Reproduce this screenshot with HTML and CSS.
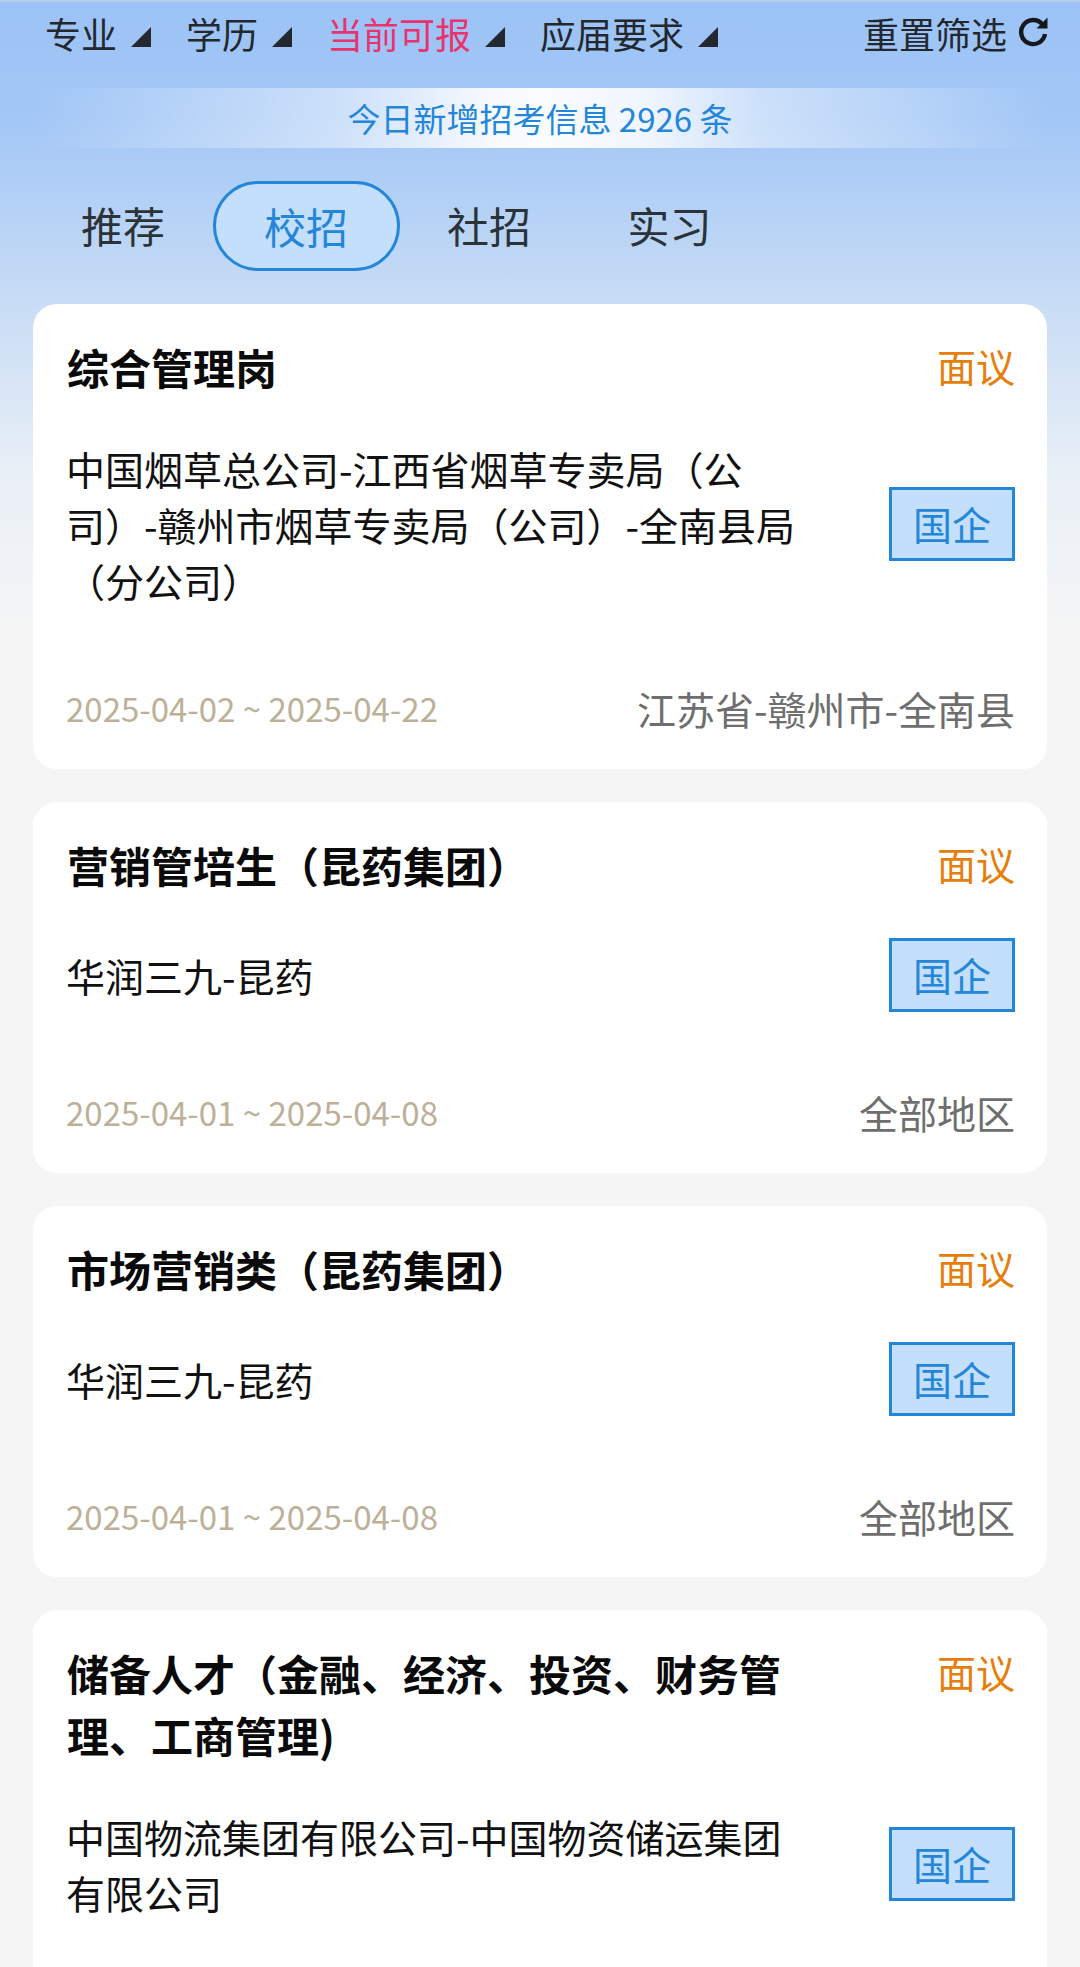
FILE: index.html
```html
<!DOCTYPE html>
<html lang="zh-CN">
<head>
  <meta charset="UTF-8">
  <meta name="viewport" content="width=device-width, initial-scale=1.0">
  <title>招考信息</title>
  <link rel="stylesheet" href="styles.css">
</head>
<body>
  <div class="page">
    <!-- Filters -->
    <div class="filters">
      <div class="filter"><span>专业</span><i class="corner"></i></div>
      <div class="filter"><span>学历</span><i class="corner"></i></div>
      <div class="filter active"><span>当前可报</span><i class="corner"></i></div>
      <div class="filter"><span>应届要求</span><i class="corner"></i></div>
      <div class="reset">
        <span>重置筛选</span>
        <svg class="reset-icon" viewBox="0 0 32 32" width="32" height="32">
          <path d="M24.5 9.5A12 12 0 1 0 27 19" fill="none" stroke="#14181f" stroke-width="4.4"/>
          <path d="M29.5 2.500V13.500H18.500Z" fill="#14181f"/>
        </svg>
      </div>
    </div>

    <div class="notice"><span>今日新增招考信息 2926 条</span></div>

    <!-- Tabs -->
    <div class="tabs">
      <div class="tab">推荐</div>
      <div class="tab selected">校招</div>
      <div class="tab">社招</div>
      <div class="tab">实习</div>
    </div>

    <!-- Job list -->
    <div class="list">
      <div class="card">
        <div class="card-top">
          <h3>综合管理岗</h3>
          <div class="salary">面议</div>
        </div>
        <div class="card-mid">
          <p>中国烟草总公司-江西省烟草专卖局（公司）-赣州市烟草专卖局（公司）-全南县局（分公司）</p>
          <div class="tag">国企</div>
        </div>
        <div class="card-bottom">
          <div class="dates">2025-04-02 ~ 2025-04-22</div>
          <div class="area">江苏省-赣州市-全南县</div>
        </div>
      </div>

      <div class="card">
        <div class="card-top">
          <h3>营销管培生（昆药集团）</h3>
          <div class="salary">面议</div>
        </div>
        <div class="card-mid">
          <p>华润三九-昆药</p>
          <div class="tag">国企</div>
        </div>
        <div class="card-bottom">
          <div class="dates">2025-04-01 ~ 2025-04-08</div>
          <div class="area">全部地区</div>
        </div>
      </div>

      <div class="card">
        <div class="card-top">
          <h3>市场营销类（昆药集团）</h3>
          <div class="salary">面议</div>
        </div>
        <div class="card-mid">
          <p>华润三九-昆药</p>
          <div class="tag">国企</div>
        </div>
        <div class="card-bottom">
          <div class="dates">2025-04-01 ~ 2025-04-08</div>
          <div class="area">全部地区</div>
        </div>
      </div>

      <!-- cut off by the bottom of the screen -->
      <div class="card last">
        <div class="card-top">
          <h3>储备人才（金融、经济、投资、财务管理、工商管理)</h3>
          <div class="salary">面议</div>
        </div>
        <div class="card-mid">
          <p>中国物流集团有限公司-中国物资储运集团有限公司</p>
          <div class="tag">国企</div>
        </div>
      </div>
    </div>
  </div>
</body>
</html>
```

FILE: styles.css
```css
* {
  box-sizing: border-box;
}

body {
  margin: 0;
  padding: 0;
  background: #f5f5f5;
  font-family: "Noto Sans CJK SC", "Noto Sans", sans-serif;
}

.page {
  height: 1967px;
  overflow: hidden;
  background: linear-gradient(180deg, #9cc3f6 0, #a3c7f6 120px, #c9ddf5 305px, #eaf0f7 480px, #f5f5f5 640px);
  border-top: 2px solid #b4cde8;
}

.filters {
  display: flex;
  align-items: center;
  height: 62px;
  padding: 0 30px 0 45px;
  font-size: 36px;
  color: #23282f;
}

.filter {
  display: flex;
  align-items: center;
  margin-right: 35px;
}

.filter.active span {
  color: #e8336f;
}

.corner {
  width: 0;
  height: 0;
  margin-left: 14px;
  margin-top: 8px;
  border-style: solid;
  border-width: 0 0 20px 20px;
  border-color: transparent transparent #23282f transparent;
}

.reset {
  display: flex;
  align-items: center;
  margin-left: auto;
  gap: 11px;
}

.reset-icon {
  margin-top: -4px;
}

.notice {
  height: 60px;
  margin: 24px 32px 0;
  display: flex;
  align-items: center;
  justify-content: center;
  font-size: 33px;
  color: #2486d9;
  background: linear-gradient(90deg, rgba(255, 255, 255, 0) 0, rgba(255, 255, 255, 0.15) 10%, rgba(255, 255, 255, 0.3) 20%, rgba(255, 255, 255, 0.45) 30%, rgba(255, 255, 255, 0.9) 45%, rgba(255, 255, 255, 0.95) 50%, rgba(255, 255, 255, 0.85) 60%, rgba(255, 255, 255, 0.45) 72%, rgba(255, 255, 255, 0.25) 85%, rgba(255, 255, 255, 0) 100%);
}

.tabs {
  display: flex;
  align-items: center;
  margin-top: 33px;
  padding-left: 41px;
  font-size: 42px;
  color: #2b3238;
}

.tab {
  width: 164px;
  height: 90px;
  margin-right: 16.500px;
  line-height: 88px;
  text-align: center;
}

.tab.selected {
  width: 187px;
  color: #2486d9;
  background: #c4dffb;
  border: 3px solid #2486d9;
  border-radius: 45px;
  margin-left: -9px;
  margin-right: 7.500px;
  line-height: 84px;
}

.list {
  display: flex;
  flex-direction: column;
  gap: 33px;
  margin-top: 33px;
  padding: 0 33px;
}

.card {
  background: #fff;
  border-radius: 24px;
  padding: 32px 32px 33px 34px;
}

.card.last {
  min-height: 500px;
}

.card-top {
  display: flex;
  justify-content: space-between;
  align-items: flex-start;
}

.card-top h3 {
  margin: 0;
  max-width: 750px;
  font-size: 42px;
  font-weight: 700;
  line-height: 62px;
  color: #0a0a0a;
}

.salary {
  font-size: 39px;
  line-height: 58px;
  color: #e67e0c;
}

.card-mid {
  display: flex;
  justify-content: space-between;
  align-items: center;
  margin-top: 42px;
}

.card-mid p {
  margin: 0 0 0 -1px;
  width: 730px;
  font-size: 39px;
  line-height: 56px;
  color: #111;
}

.tag {
  flex: none;
  width: 126px;
  height: 74px;
  line-height: 66px;
  text-align: center;
  font-size: 39px;
  color: #2486d9;
  background: #c4dffb;
  border: 3px solid #2486d9;
}

.card-bottom {
  display: flex;
  justify-content: space-between;
  align-items: center;
  margin-top: 72px;
}

.dates {
  margin-left: -1px;
  font-size: 33px;
  color: #bcb198;
}

.area {
  font-size: 39px;
  color: #6e6e6e;
}
```
